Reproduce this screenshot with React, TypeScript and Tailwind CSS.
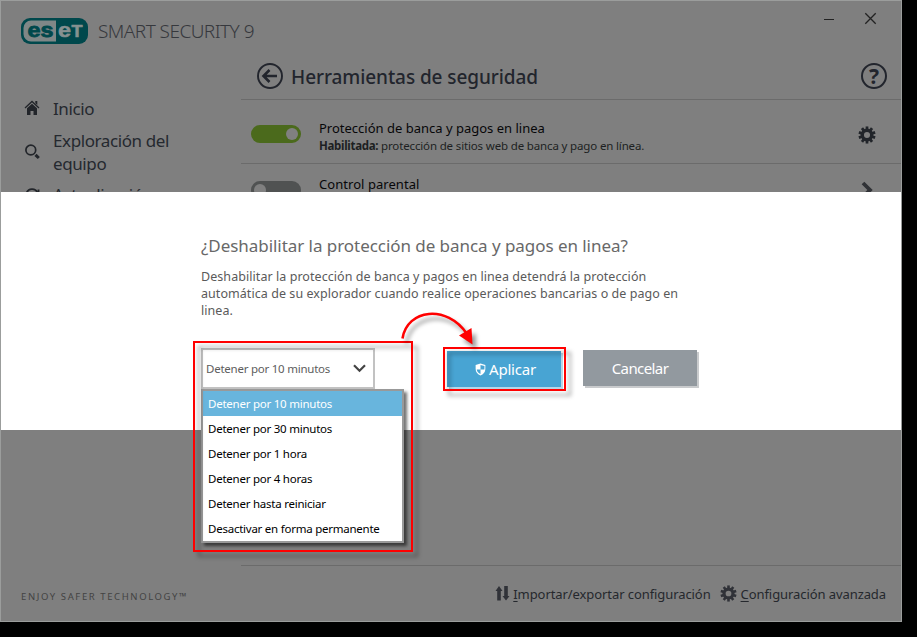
import type { ReactNode } from "react";

const GEAR_TEETH = [0, 36, 72, 108, 144, 180, 216, 252, 288, 324];

function Gear({ size, color }: { size: number; color: string }) {
  return (
    <svg width={size} height={size} viewBox="-8 -8 16 16" className="shrink-0">
      {GEAR_TEETH.map((a) => (
        <rect key={a} x="-1.2" y="-7.6" width="2.4" height="4" fill={color} transform={`rotate(${a})`} />
      ))}
      <circle r="4.2" fill="none" stroke={color} strokeWidth="3" />
    </svg>
  );
}

function EsetLogo() {
  return (
    <svg width="67" height="26" viewBox="0 0 67 26" className="shrink-0 font-['Liberation_Sans',sans-serif] font-bold">
      <rect width="67" height="26" rx="9" fill="#00484c" />
      <path d="M35 2.5H10a7.5 7.5 0 0 0-7.5 7.5v6a7.5 7.5 0 0 0 7.5 7.5h25z" fill="#7f8787" />
      <text x="6.5" y="18.5" fontSize="21" textLength="26" lengthAdjust="spacingAndGlyphs" fill="#00484c" stroke="#00484c" strokeWidth="0.8">es</text>
      <text x="37" y="18.5" fontSize="21" textLength="13" lengthAdjust="spacingAndGlyphs" fill="#879191" stroke="#879191" strokeWidth="0.6">e</text>
      <text x="50.5" y="18.5" fontSize="16" textLength="11" lengthAdjust="spacingAndGlyphs" fill="#879191" stroke="#879191" strokeWidth="0.6">T</text>
    </svg>
  );
}

function Toggle({ on }: { on?: boolean }) {
  return (
    <div className={`flex h-[18px] w-[50px] items-center rounded-full px-[3px] ${on ? "justify-end bg-[#4b6a1c]" : "bg-[#505252]"}`}>
      <span className="size-[12px] rounded-full bg-[#808080]" />
    </div>
  );
}

function NavItem({ icon, children }: { icon: ReactNode; children: ReactNode }) {
  return (
    <div className="flex pl-[23px]">
      <span className="flex w-[29px] items-center">{icon}</span>
      <span className="whitespace-nowrap">{children}</span>
    </div>
  );
}

function Sidebar() {
  return (
    <aside className="w-[240px] shrink-0">
      <div className="flex h-[60px] items-center gap-[10px] pl-[20px]">
        <EsetLogo />
        <span className="text-[19px] font-light tracking-[-0.55px] whitespace-nowrap text-[#36383d]">SMART SECURITY 9</span>
      </div>
      <nav className="flex flex-col gap-[9px] pt-[36px] text-[17px] leading-[23px] tracking-[-0.4px] text-[#25292f]">
        <NavItem
          icon={
            <svg width="16" height="16" viewBox="0 0 16 16" className="-mt-[2px]">
              <path d="M1 8 8 1.5 15 8" fill="none" stroke="#22252a" strokeWidth="1.3" />
              <path d="M11.3 1h2v4l-2-1.8zM3 8.2 8 3.7l5 4.5V15H9.5v-4h-3v4H3z" fill="#22252a" />
            </svg>
          }
        >
          Inicio
        </NavItem>
        <NavItem
          icon={
            <svg width="16" height="16" viewBox="0 0 16 16" fill="none" stroke="#22252a">
              <circle cx="6.8" cy="6" r="4.9" strokeWidth="1.7" />
              <path d="m11.5 10.8 3.3 3.2" strokeWidth="3" />
            </svg>
          }
        >
          Exploración del
          <br />
          equipo
        </NavItem>
        <div className="-mt-px">
          <NavItem
            icon={
              <svg width="16" height="16" viewBox="0 0 16 16" fill="none" stroke="#22252a" strokeWidth="1.8">
                <path d="M2.5 6a6 6 0 0 1 11-.5M13.5 10a6 6 0 0 1-11 .5" />
                <path d="M14.5 2.5v4.2h-4M1.5 13.5V9.3h4" />
              </svg>
            }
          >
            Actualización
          </NavItem>
        </div>
      </nav>
    </aside>
  );
}

function SecurityTools() {
  return (
    <main className="min-w-0 flex-1">
      <div className="flex h-[36px] items-center justify-end gap-[30px] pr-[24px]">
        <span className="h-px w-[10px] bg-[#222]" />
        <svg width="13" height="13" viewBox="0 0 13 13" stroke="#222" strokeWidth="1.3" className="-mt-[2px]">
          <path d="m1.3 1.3 10.4 10.4M11.7 1.3 1.3 11.7" />
        </svg>
      </div>
      <header className="flex h-[63px] items-center border-b border-[#6b6b6b] pt-[17px] pr-[14px] pb-px pl-[15px]">
        <svg width="28" height="28" viewBox="0 0 28 28" fill="none" stroke="#22252d">
          <circle cx="14" cy="14" r="12" strokeWidth="1.9" />
          <path d="M21 14H8M13.5 8 7.5 14l6 6" strokeWidth="2.6" />
        </svg>
        <h1 className="mt-[2px] ml-[7px] flex-1 text-[19px] leading-[24px] font-medium tracking-[-0.08px] whitespace-nowrap text-[#22252d]">Herramientas de seguridad</h1>
        <span className="flex size-[26px] items-center justify-center rounded-full border-2 border-[#22252d] text-[21px] leading-none font-bold text-[#22252d]">?</span>
      </header>
      <section className="flex h-[64px] border-b border-[#6b6b6b] pl-[10px]">
        <div className="pt-[25px]">
          <Toggle on />
        </div>
        <div className="ml-[18px] flex-1 pt-[19px] whitespace-nowrap">
          <p className="text-[13px] leading-[18px] text-[#070709]">Protección de banca y pagos en linea</p>
          <p className="pt-px text-[11.5px] leading-[16px] tracking-[-0.15px] text-[#1d1f22]">
            <b className="tracking-[-0.3px]">Habilitada:</b> protección de sitios web de banca y pago en línea.
          </p>
        </div>
        <div className="pt-[26px] pr-[25px]">
          <Gear size={18} color="#22252a" />
        </div>
      </section>
      <section className="flex h-[64px] pl-[10px]">
        <div className="pt-[17px]">
          <Toggle />
        </div>
        <p className="ml-[18px] flex-1 pt-[11px] text-[13px] leading-[18px] tracking-[0.05px] text-[#070709]">Control parental</p>
        <svg width="14" height="18" viewBox="0 0 14 18" className="mt-[17px] mr-[26px]" fill="none" stroke="#303236" strokeWidth="3.8">
          <path d="m2 2 7 7-7 7" />
        </svg>
      </section>
    </main>
  );
}

const OPTIONS = [
  "Detener por 10 minutos",
  "Detener por 30 minutos",
  "Detener por 1 hora",
  "Detener por 4 horas",
  "Detener hasta reiniciar",
  "Desactivar en forma permanente",
];

function DurationSelect() {
  return (
    <div className="relative h-[41px] w-[174px] border-2 border-[#c2c2c2] bg-white">
      <div className="flex h-full items-center justify-between pr-[7px] pl-[3px] text-[11.5px] text-[#5d5d5d]">
        <span className="tracking-[-0.24px] whitespace-nowrap">Detener por 10 minutos</span>
        <svg width="13" height="9" viewBox="0 0 13 9" fill="none" stroke="#444" strokeWidth="2.2">
          <path d="m1 1.3 5.5 5.5L12 1.3" />
        </svg>
      </div>
      <ul className="absolute top-[39px] -left-[2px] z-10 w-[203px] border-2 border-[#999] bg-white text-[11.5px] text-black shadow-[3px_3px_3px_rgba(0,0,0,0.55)]">
        {OPTIONS.map((label, i) => (
          <li key={label} className={`flex h-[25px] items-center pt-px pl-[5px] tracking-[-0.24px] whitespace-nowrap ${i === 0 ? "bg-[#68b5dd] text-white" : ""}`}>
            {label}
          </li>
        ))}
      </ul>
    </div>
  );
}

function Dialog() {
  return (
    <section className="h-[238px] bg-white pt-[41px] pl-[200px]">
      <h2 className="text-[17px] leading-[26px] tracking-[-0.05px] whitespace-nowrap text-[#686868]">¿Deshabilitar la protección de banca y pagos en linea?</h2>
      <p className="mt-[9px] text-[12.5px] leading-[17px] tracking-[0.06px] whitespace-nowrap text-[#5a5a5a]">
        Deshabilitar la protección de banca y pagos en linea detendrá la protección
        <br />
        automática de su explorador cuando realice operaciones bancarias o de pago en
        <br />
        linea.
      </p>
      <div className="mt-[29px] flex">
        <DurationSelect />
        <button className="mt-[3px] ml-[72px] flex h-[36px] w-[114px] items-center justify-center gap-[3px] bg-[#48a4d3] pl-[3px] text-[15px] tracking-[-0.2px] text-white shadow-[2px_2px_0_#b5d6e8]">
          <svg width="11" height="13" viewBox="0 0 12 14">
            <path d="M6 .5 11.3 2v4.5C11.3 10 9 12.3 6 13.5 3 12.3.7 10 .7 6.5V2z" fill="white" />
            <path d="M6 2.2V7h4.2c.1-1.2.1-2.4.1-3.8zM6 7v5C3.800 11 2.200 9.300 1.900 7z" fill="#48a4d3" />
          </svg>
          Aplicar
        </button>
        <button className="mt-[2px] ml-[22px] h-[36px] w-[114px] bg-[#92999f] text-[15px] tracking-[-0.6px] text-white shadow-[2px_2px_0_#c9cbcd]">Cancelar</button>
      </div>
    </section>
  );
}

function Footer() {
  return (
    <footer className="flex flex-1 flex-col justify-end">
      <div className="ml-[240px] border-t border-[#6b6b6b]" />
      <div className="flex h-[55px] items-center pl-[20px] text-[13px] whitespace-nowrap text-[#25282d]">
        <span className="mt-[8px] text-[9.5px] tracking-[1.6px] text-[#434343]">ENJOY SAFER TECHNOLOGY™</span>
        <div className="ml-auto flex items-center pt-[3px] pr-[15px] tracking-[-0.08px]">
          <svg width="15" height="15" viewBox="0 0 15 15" fill="#303238" className="-mt-[4px]">
            <path d="M4 0 7.500 5H5.800v9.500H2.200V5H.5zM11 14.500 7.500 10h1.700V0h3.600v10h1.700z" />
          </svg>
          <span className="ml-[3px]">
            <u className="underline-offset-2">I</u>mportar/exportar configuración
          </span>
          <span className="w-[9px]" />
          <span className="-mt-[4px]">
            <Gear size={17} color="#303238" />
          </span>
          <span className="ml-[4px]">
            <u className="underline-offset-2">C</u>onfiguración avanzada
          </span>
        </div>
      </div>
    </footer>
  );
}

function Annotations() {
  return (
    <div className="pointer-events-none absolute inset-0 z-20">
      <div className="absolute top-[341px] left-[193px] h-[211px] w-[220px] border-2 border-[#f00] drop-shadow-[5px_5px_2px_rgba(0,0,0,0.35)]" />
      <div className="absolute top-[347px] left-[443px] h-[44px] w-[123px] border-2 border-[#f00] drop-shadow-[5px_5px_2px_rgba(0,0,0,0.35)]" />
      <svg width="90" height="45" viewBox="395 305 90 45" className="absolute top-[305px] left-[395px] drop-shadow-[4px_5px_2px_rgba(0,0,0,0.4)]">
        <path d="M402.500 338.500C407 309 447 304 467 334" fill="none" stroke="#f00" strokeWidth="2.6" />
        <path d="m472.500 344.500-13.500-9 12.500-7.500z" fill="#f00" />
      </svg>
    </div>
  );
}

export default function App() {
  return (
    <div className="h-[637px] w-[917px] overflow-hidden bg-black font-['Noto_Sans',sans-serif]">
      <div className="relative h-[622px] w-[902px]">
        <div className="flex h-full flex-col border border-[#9b9d9c] bg-[#7f7f7f]">
          <div className="flex h-[191px] shrink-0 overflow-hidden">
            <Sidebar />
            <SecurityTools />
          </div>
          <Dialog />
          <Footer />
        </div>
        <Annotations />
      </div>
    </div>
  );
}
